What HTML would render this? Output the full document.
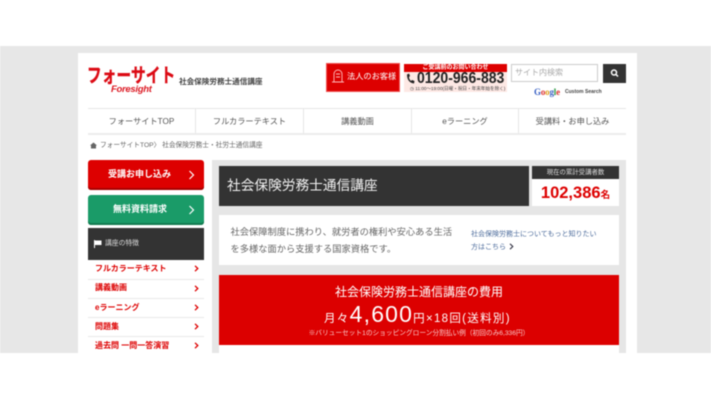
<!DOCTYPE html>
<html lang="ja"><head><meta charset="utf-8">
<style>
html,body{margin:0;padding:0;width:711px;height:400px;overflow:hidden;background:#fff}
body{font-family:"Liberation Sans","Noto Sans CJK JP",sans-serif;position:relative}
#w{position:absolute;left:0;top:0;width:711px;height:400px;filter:blur(.4px)}
.a{position:absolute;white-space:nowrap}
.c{text-align:center}
.m{left:95px;font-size:8px;font-weight:bold;color:#dd0000;line-height:12px}
.l{left:88px;width:116px;height:1px;background:#e8e8e8}
.g{width:5px;height:7px;left:194px}
</style></head><body><div id="w">
<div class="a" style="left:0;top:46px;width:711px;height:307px;background:#e7e7e7"></div>
<div class="a" style="left:78px;top:53px;width:559px;height:300px;background:#fff"></div>

<div class="a" style="left:87px;top:64px;font-size:19.500px;line-height:24px;font-weight:bold;color:#dc0a14;transform:scaleX(.75);transform-origin:left top;letter-spacing:.2px;-webkit-text-stroke:.4px #dc0a14">フォーサイト</div>
<div class="a" style="left:111px;top:84px;font:italic bold 9.500px/12px 'Liberation Sans',sans-serif;color:#dc1a24;letter-spacing:-.3px">Foresight</div>
<div class="a" style="left:179px;top:76px;font-size:7.600px;line-height:12px;font-weight:bold;color:#444">社会保険労務士通信講座</div>

<div class="a" style="left:326px;top:63px;width:74px;height:29px;background:#dd0000;box-sizing:border-box;border:1px solid #f05050"></div>
<svg class="a" style="left:331px;top:69px" width="14" height="15" viewBox="0 0 14 15" fill="none" stroke="#fbb" stroke-width=".9"><path d="M3 13V5a4 4 0 0 1 8 0v8M1 13h12M5 5h4M5 8h4"/></svg>
<div class="a" style="left:347px;top:71px;font-size:8.200px;line-height:12px;color:#fff">法人のお客様</div>

<div class="a" style="left:404px;top:64px;width:103px;height:28px;background:#fde8e4"></div>
<div class="a c" style="left:404px;top:64px;width:103px;height:8px;background:#dd0000;color:#fff;font-size:6px;line-height:8px;font-weight:bold">ご受講前のお問い合わせ</div>
<svg class="a" style="left:406px;top:73px" width="9" height="11" viewBox="0 0 9 11"><path d="M1 1.500C1 6 3 10 8 10.500L8.500 8 6 7 5 8C3.800 7 3 5.500 3 4L4 3 3 .5Z" fill="#222"/></svg>
<div class="a" style="left:417px;top:70px;font-size:15.500px;line-height:17px;font-weight:bold;color:#222;transform:scaleX(.905);transform-origin:left top">0120-966-883</div>
<div class="a" style="left:410px;top:84.500px;font-size:4.600px;line-height:7px;color:#444">◷ 11:00～19:00(日曜・祝日・年末年始を除く)</div>

<div class="a" style="left:511px;top:64px;width:87px;height:18px;background:#fff;box-sizing:border-box;border:1px solid #ccc"></div>
<div class="a" style="left:515px;top:67px;font-size:8px;line-height:12px;color:#aaa">サイト内検索</div>
<div class="a" style="left:603px;top:64px;width:23px;height:19px;background:#333"></div>
<svg class="a" style="left:610px;top:68px" width="9" height="10" viewBox="0 0 9 10" fill="none" stroke="#fff" stroke-width="1.500"><circle cx="4" cy="4.500" r="2.500"/><path d="M6 6.500L8 8.500"/></svg>
<div class="a" style="left:534px;top:86px;font:bold 9px/12px 'Liberation Serif',serif;letter-spacing:-.2px"><span style="color:#3b62c4">G</span><span style="color:#d33">o</span><span style="color:#e0a020">o</span><span style="color:#3b62c4">g</span><span style="color:#2a9a40">l</span><span style="color:#d33">e</span></div>
<div class="a" style="left:565px;top:88px;font-size:5px;line-height:9px;font-weight:bold;color:#444">Custom Search</div>

<div class="a" style="left:88px;top:108px;width:538px;height:1px;background:#e6e6e6"></div>
<div class="a" style="left:88px;top:133px;width:538px;height:2px;background:#ececec"></div>
<div class="a" style="left:195px;top:109px;width:1px;height:24px;background:#e6e6e6"></div>
<div class="a" style="left:303px;top:109px;width:1px;height:24px;background:#e6e6e6"></div>
<div class="a" style="left:411px;top:109px;width:1px;height:24px;background:#e6e6e6"></div>
<div class="a" style="left:518px;top:109px;width:1px;height:24px;background:#e6e6e6"></div>
<div class="a c" style="left:88px;top:114.500px;width:107px;font-size:8.200px;line-height:14px;color:#555">フォーサイトTOP</div>
<div class="a c" style="left:196px;top:114.500px;width:107px;font-size:8.200px;line-height:14px;color:#555">フルカラーテキスト</div>
<div class="a c" style="left:304px;top:114.500px;width:107px;font-size:8.200px;line-height:14px;color:#555">講義動画</div>
<div class="a c" style="left:412px;top:114.500px;width:106px;font-size:8.200px;line-height:14px;color:#555">eラーニング</div>
<div class="a c" style="left:519px;top:114.500px;width:107px;font-size:8.200px;line-height:14px;color:#555">受講料・お申し込み</div>

<svg class="a" style="left:90px;top:142px" width="7" height="7" viewBox="0 0 7 7"><path d="M3.500 .5L7 3.500H6V6.500H1V3.500H0Z" fill="#666"/></svg>
<div class="a" style="left:100px;top:139.500px;font-size:6.700px;line-height:12px;color:#666">フォーサイトTOP〉 社会保険労務士・社労士通信講座</div>

<div class="a" style="left:88px;top:160px;width:116px;height:30px;background:#dd0000;border-radius:3px;box-shadow:inset 0 -2px 0 #a80000"></div>
<div class="a" style="left:108px;top:167.500px;font-size:9px;line-height:13px;font-weight:bold;color:#fff">受講お申し込み</div>
<svg class="a" style="left:188px;top:170px" width="7" height="10" viewBox="0 0 7 10" fill="none" stroke="#fff" stroke-width="1.200"><path d="M1.500 1L5.500 5L1.500 9"/></svg>
<div class="a" style="left:88px;top:195px;width:116px;height:30px;background:#1a9b68;border-radius:3px;box-shadow:inset 0 -2px 0 #127a50"></div>
<div class="a" style="left:113px;top:202.500px;font-size:9px;line-height:13px;font-weight:bold;color:#fff">無料資料請求</div>
<svg class="a" style="left:188px;top:205px" width="7" height="10" viewBox="0 0 7 10" fill="none" stroke="#fff" stroke-width="1.200"><path d="M1.500 1L5.500 5L1.500 9"/></svg>
<div class="a" style="left:88px;top:228px;width:116px;height:32px;background:#333"></div>
<svg class="a" style="left:94px;top:240px" width="8" height="8" viewBox="0 0 8 8"><path d="M0 0H1V8H0ZM1 .5H7.500V5H1Z" fill="#fff"/></svg>
<div class="a" style="left:105px;top:238px;font-size:6.800px;line-height:12px;color:#ddd">講座の特徴</div>

<div class="a m" style="top:263px">フルカラーテキスト</div>
<svg class="a g" style="top:265px" viewBox="0 0 5 7" fill="none" stroke="#d00" stroke-width="1.300"><path d="M1 .8L3.800 3.500L1 6.200"/></svg>
<div class="a l" style="top:279px"></div>
<div class="a m" style="top:282px">講義動画</div>
<svg class="a g" style="top:284.500px" viewBox="0 0 5 7" fill="none" stroke="#d00" stroke-width="1.300"><path d="M1 .8L3.800 3.500L1 6.200"/></svg>
<div class="a l" style="top:298px"></div>
<div class="a m" style="top:302px">eラーニング</div>
<svg class="a g" style="top:304px" viewBox="0 0 5 7" fill="none" stroke="#d00" stroke-width="1.300"><path d="M1 .8L3.800 3.500L1 6.200"/></svg>
<div class="a l" style="top:317px"></div>
<div class="a m" style="top:321px">問題集</div>
<svg class="a g" style="top:323px" viewBox="0 0 5 7" fill="none" stroke="#d00" stroke-width="1.300"><path d="M1 .8L3.800 3.500L1 6.200"/></svg>
<div class="a l" style="top:336px"></div>
<div class="a m" style="top:340px">過去問 一問一答演習</div>
<svg class="a g" style="top:342px" viewBox="0 0 5 7" fill="none" stroke="#d00" stroke-width="1.300"><path d="M1 .8L3.800 3.500L1 6.200"/></svg>

<div class="a" style="left:212px;top:160px;width:414px;height:193px;background:#e6e6e6"></div>
<div class="a" style="left:219px;top:166px;width:310px;height:40px;background:#333"></div>
<div class="a" style="left:227px;top:176px;font-size:13.700px;line-height:19px;color:#f2f2f2">社会保険労務士通信講座</div>
<div class="a" style="left:532px;top:179px;width:87px;height:27px;background:#fff"></div>
<div class="a c" style="left:532px;top:166px;width:87px;height:13px;background:#333;color:#ddd;font-size:6.400px;line-height:13px">現在の累計受講者数</div>
<div class="a c" style="left:532px;top:183px;width:87px;line-height:20px;font-size:16.500px;font-weight:bold;color:#dd0000">102,386<span style="font-size:9.500px">名</span></div>

<div class="a" style="left:219px;top:215px;width:400px;height:50px;background:#fff"></div>
<div class="a" style="left:230.500px;top:223.500px;font-size:9.250px;line-height:17px;color:#666">社会保障制度に携わり、就労者の権利や安心ある生活<br>を多様な面から支援する国家資格です。</div>
<div class="a" style="left:471px;top:228px;font-size:7px;line-height:13px;color:#4d6c9c">社会保険労務士についてもっと知りたい<br>方はこちら</div>
<svg class="a" style="left:509px;top:243px" width="5" height="7" viewBox="0 0 5 7" fill="none" stroke="#334" stroke-width="1.100"><path d="M1 .8L3.800 3.500L1 6.200"/></svg>

<div class="a" style="left:219px;top:275px;width:400px;height:70px;background:#dc0000;box-shadow:0 1px 0 #f06060"></div>
<div class="a" style="left:219px;top:345px;width:400px;height:8px;background:#fff"></div>
<div class="a c" style="left:219px;top:283px;width:400px;font-size:12px;line-height:18px;color:#fff">社会保険労務士通信講座の費用</div>
<div class="a" style="left:324px;top:299px;height:30px;line-height:30px;color:#fff;font-size:11.500px;letter-spacing:1.300px">月々<span style="font-size:23px;letter-spacing:1.200px">4,600</span>円×18回(送料別)</div>
<div class="a c" style="left:219px;top:327.500px;width:400px;font-size:6.700px;line-height:12px;color:#f8c8c8">※バリューセット1のショッピングローン分割払い例（初回のみ6,336円）</div>
</div></body></html>
